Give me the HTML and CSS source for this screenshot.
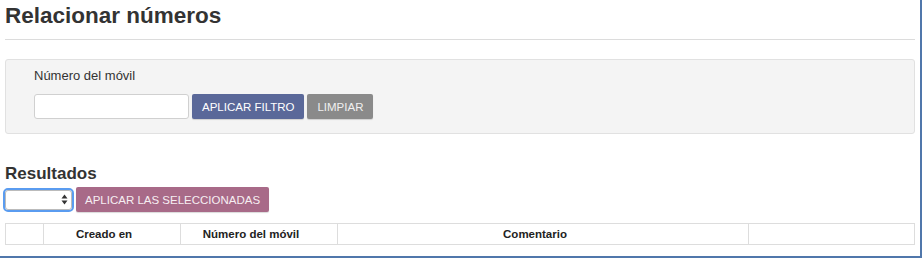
FILE: index.html
```html
<!DOCTYPE html>
<html lang="es">
  <head>
    <meta charset="UTF-8" />
    <title>Relacionar números</title>
    <link rel="stylesheet" href="styles.css">
  </head>
  <body>
    <div class="page">
      <h1 class="page-title">Relacionar números</h1>
      <hr class="divider" />

      <!-- Filter panel -->
      <div class="filter-panel">
        <label class="filter-label" for="movil">Número del móvil</label>
        <div class="filter-row">
          <input type="text" id="movil" class="filter-input" />
          <button class="btn btn-filter">APLICAR FILTRO</button>
          <button class="btn btn-clear">LIMPIAR</button>
        </div>
      </div>

      <!-- Results -->
      <h2 class="results-title">Resultados</h2>
      <div class="results-actions">
        <span class="select-wrap">
          <select class="action-select"><option></option></select>
          <svg class="select-arrows" width="7" height="11" viewBox="0 0 7 11">
            <path d="M3.5 0.5 L6.5 4.5 H0.5 Z M3.5 10.5 L6.5 6.5 H0.5 Z" fill="#333" />
          </svg>
        </span>
        <button class="btn btn-apply">APLICAR LAS SELECCIONADAS</button>
      </div>
      <table class="results-table">
        <thead>
          <tr>
            <th class="col-check"></th>
            <th class="col-date">Creado en</th>
            <th class="col-number">Número del móvil</th>
            <th class="col-comment">Comentario</th>
            <th class="col-extra"></th>
          </tr>
        </thead>
      </table>
    </div>
  </body>
</html>
```

FILE: styles.css
```css
/* basic styling */
* {
  margin: 0;
  padding: 0;
  box-sizing: border-box;
}
body {
  font-family: "Liberation Sans", Arial, sans-serif;
  color: #333333;
  background: #ffffff;
}

/* page frame */
.page {
  width: 922px;
  height: 258px;
  padding: 0 5px;
  border-right: 2px solid #5077ab;
  border-bottom: 2px solid #5077ab;
  overflow: hidden;
}

/* title */
.page-title {
  font-size: 22.5px;
  font-weight: bold;
  line-height: 26px;
  padding-top: 3px;
}
.divider {
  border: none;
  border-top: 1px solid #dcdcdc;
  margin-top: 10px;
}

/* filter panel */
.filter-panel {
  margin-top: 19px;
  height: 75px;
  padding: 8px 28px 0;
  background: #f4f4f4;
  border: 1px solid #e1e1e1;
  border-radius: 3px;
}
.filter-label {
  display: block;
  font-size: 13px;
  line-height: 16px;
  color: #333333;
}
.filter-row {
  display: flex;
  gap: 3px;
  margin-top: 10px;
}
.filter-input {
  width: 155px;
  height: 25px;
  border: 1px solid #d0d0d0;
  border-radius: 3px;
  background: #ffffff;
}

/* buttons */
.btn {
  height: 25px;
  padding: 0 10px;
  border: none;
  border-radius: 2px;
  color: #ffffff;
  font-family: "Liberation Sans", Arial, sans-serif;
  font-size: 11.5px;
  cursor: pointer;
  box-shadow: 0 1px 1px rgba(0, 0, 0, 0.15);
}
.btn-filter {
  background-color: #5a6899;
}
.btn-clear {
  background-color: #8a8a8a;
  color: #f0f0f0;
}
.btn-apply {
  background-color: #a86a88;
  padding: 0 9px;
  color: #f6eef2;
}

/* results */
.results-title {
  font-size: 17px;
  font-weight: bold;
  line-height: 20px;
  margin-top: 30px;
}
.results-actions {
  display: flex;
  align-items: center;
  gap: 4px;
  margin-top: 3px;
}
.select-wrap {
  position: relative;
  display: block;
  height: 20px;
}
.action-select {
  appearance: none;
  display: block;
  width: 67px;
  height: 20px;
  border: 1px solid #bbbbbb;
  border-radius: 3px;
  outline: 2px solid #5a9cf0;
  outline-offset: 0;
  background: #ffffff;
  font-size: 12px;
}
.select-arrows {
  position: absolute;
  right: 4px;
  top: 4px;
}

/* table */
.results-table {
  width: 910px;
  margin-top: 11px;
  border-collapse: collapse;
  border: 1px solid #dddddd;
}
.results-table th {
  height: 21px;
  padding-right: 16px;
  border: 1px solid #dddddd;
  font-size: 11.5px;
  font-weight: bold;
  color: #222222;
  text-align: center;
}
.col-check {
  width: 38px;
}
.col-date {
  width: 137px;
}
.col-number {
  width: 157px;
}
.col-comment {
  width: 411px;
}
```
